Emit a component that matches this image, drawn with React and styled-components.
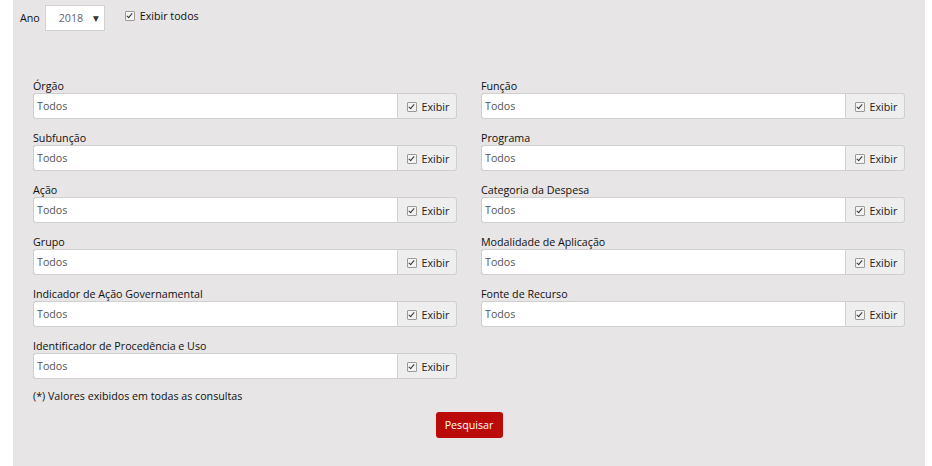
import React from 'react'
import styled, { createGlobalStyle } from 'styled-components';

const Global = createGlobalStyle`
    html, body {
        margin: 0;
        padding: 0;
        background: #fff;
        font-family: 'Open Sans', 'Liberation Sans', sans-serif;
    }
`

const Panel = styled.div`
    margin: 0 7px 0 13px;
    background-color: #e7e5e5;
    min-height: 466px;
    box-sizing: border-box;
    padding: 5px 20px 0 20px;
    color: #111;
    font-size: 10.7px;
`

const TopBar = styled.div`
    display: flex;
    align-items: center;
    height: 26px;
    margin-left: -13px;
`

const AnoLabel = styled.span`
    margin-right: 5px;
`

const Select = styled.div`
    width: 60px;
    height: 26px;
    box-sizing: border-box;
    background: #fff;
    border: 1px solid #d2d2d2;
    display: flex;
    align-items: center;
    justify-content: space-between;
    padding: 0 5px 0 13px;
    color: #666;
    margin-right: 20px;

    span:last-child {
        color: #333;
        font-size: 7.5px;
        font-family: 'DejaVu Sans', sans-serif;
    }
`

const Check = styled.span`
    display: inline-block;
    width: 8px;
    height: 8px;
    border: 1px solid #9a9a9a;
    border-radius: 1px;
    background: #f4f4f4;
    position: relative;
    margin-right: 5px;
    flex-shrink: 0;

    &::after {
        content: '';
        position: absolute;
        left: 2px;
        top: 0px;
        width: 2px;
        height: 5px;
        border: solid #333;
        border-width: 0 1.5px 1.5px 0;
        transform: rotate(40deg);
    }
`

const CheckLabel = styled.label`
    display: flex;
    align-items: center;
    margin-top: -4px;
`

const Grid = styled.div`
    display: grid;
    grid-template-columns: 1fr 1fr;
    column-gap: 24px;
    row-gap: 8px;
    margin-top: 44px;
`

const Field = styled.div`
    display: flex;
    flex-direction: column;
`

const Label = styled.div`
    height: 14px;
    padding-top: 4px;
    line-height: 14px;
`

const Group = styled.div`
    display: flex;
    height: 26px;
`

const Input = styled.div`
    flex: 1;
    box-sizing: border-box;
    background: #fff;
    border: 1px solid #cfcfcf;
    border-right: none;
    border-radius: 3px 0 0 3px;
    padding: 0 3px;
    display: flex;
    align-items: center;
    color: #555;
`

const Addon = styled.div`
    width: 60px;
    box-sizing: border-box;
    background: #eeeeee;
    border: 1px solid #cfcfcf;
    border-radius: 0 3px 3px 0;
    display: flex;
    align-items: center;
    justify-content: center;
    padding: 2px 0 0 2px;
    color: #222;
`

const Note = styled.div`
    margin-top: 10px;
`

const Actions = styled.div`
    display: flex;
    justify-content: center;
    margin-top: 9px;
`

const Button = styled.button`
    background: #bb0a0a;
    color: #fff;
    border: none;
    border-radius: 3px;
    font-family: inherit;
    font-size: 10.7px;
    height: 26px;
    width: 67px;
    padding: 0;
`

const fields = [
    "Órgão", "Função",
    "Subfunção", "Programa",
    "Ação", "Categoria da Despesa",
    "Grupo", "Modalidade de Aplicação",
    "Indicador de Ação Governamental", "Fonte de Recurso",
    "Identificador de Procedência e Uso"
];

const App = () => {
    return (
        <Panel>
            <Global />
            <TopBar>
                <AnoLabel>Ano</AnoLabel>
                <Select><span>2018</span><span>▼</span></Select>
                <CheckLabel><Check />Exibir todos</CheckLabel>
            </TopBar>
            <Grid>
                {fields.map((f) => (
                    <Field key={f}>
                        <Label>{f}</Label>
                        <Group>
                            <Input>Todos</Input>
                            <Addon><Check />Exibir</Addon>
                        </Group>
                    </Field>
                ))}
            </Grid>
            <Note>(*) Valores exibidos em todas as consultas</Note>
            <Actions>
                <Button>Pesquisar</Button>
            </Actions>
        </Panel>
    )
}

export default App
